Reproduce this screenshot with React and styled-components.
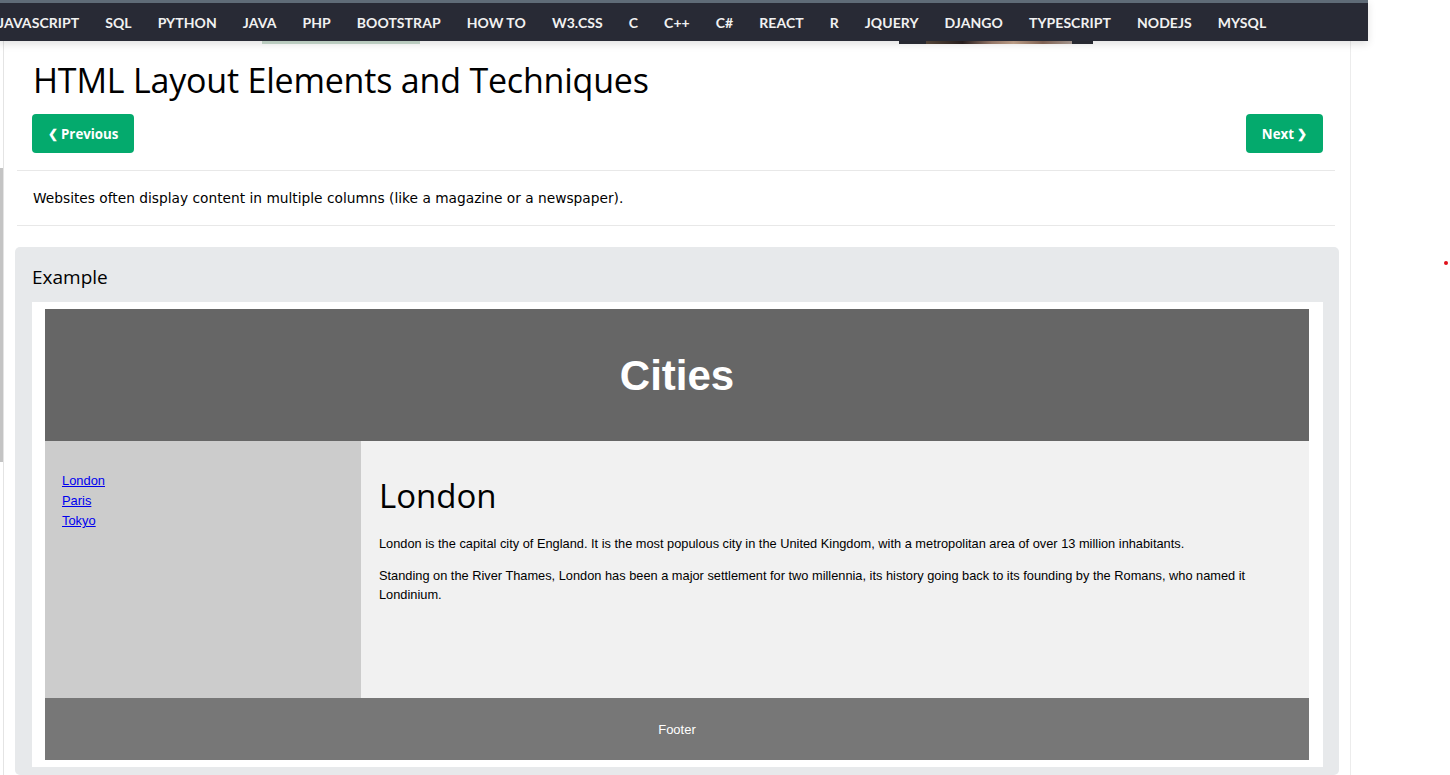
import React from "react";
import styled, { createGlobalStyle } from "styled-components";

const Global = createGlobalStyle`
  html, body { margin: 0; padding: 0; background: #fff; }
  body { width: 1450px; height: 775px; overflow: hidden; }
  * { box-sizing: border-box; }
`;

const Page = styled.div`
  position: relative;
  width: 1450px;
  height: 775px;
  overflow: hidden;
`;

const TopNav = styled.nav`
  position: relative;
  z-index: 2;
  width: 1370px;
  height: 41px;
  background: #282a35;
  border-top: 3px solid #5f6b77;
  display: flex;
  align-items: center;
  gap: 26px;
  margin-left: -2px;
  box-shadow: 0 3px 8px rgba(0, 0, 0, 0.12);
  overflow: hidden;
`;

const NavItem = styled.a`
  color: #f1f1f1;
  font-family: Lato, "Open Sans", sans-serif;
  font-weight: 700;
  font-size: 14px;
  letter-spacing: 0.06px;
  white-space: nowrap;
  text-decoration: none;
`;

const Peek = styled.div`
  position: absolute;
  z-index: 1;
  top: 41px;
  height: 3px;
  left: ${(p) => p.$left}px;
  width: ${(p) => p.$width}px;
  background: ${(p) => p.$bg};
`;

const Body = styled.div`
  display: flex;
  height: 734px;
`;

const LeftRail = styled.div`
  width: 4px;
  border-right: 1px solid #e4e4e4;
  display: flex;
  flex-direction: column;
  padding-top: 127px;
`;

const RailThumb = styled.div`
  width: 3px;
  height: 294px;
  background: #c4c4c4;
`;

const Main = styled.main`
  width: 1347px;
  border-right: 1px solid #ececec;
  padding-left: 11px;
`;

const Content = styled.div`
  width: 1324px;
`;

const Title = styled.h1`
  margin: 0;
  padding: 17px 0 0 18px;
  height: 73px;
  font-family: "Open Sans", "Noto Sans", sans-serif;
  font-weight: 400;
  font-size: 34px;
  line-height: 44px;
  color: #000;
  letter-spacing: -0.2px;
`;

const ButtonRow = styled.div`
  display: flex;
  justify-content: space-between;
  padding: 0 16px 0 17px;
  height: 56px;
`;

const NavButton = styled.a`
  display: inline-flex;
  align-items: center;
  gap: 3px;
  height: 39px;
  padding: 0 ${(p) => p.$pad};
  background: #04aa6d;
  color: #fff;
  border-radius: 4px;
  font-family: "Open Sans", sans-serif;
  font-weight: 700;
  font-size: 13.3px;
  text-decoration: none;
`;

const Chevron = styled.span`
  font-size: 12px;
`;

const Rule = styled.hr`
  margin: 0 4px 0 2px;
  border: 0;
  border-top: 1px solid #e8e8e8;
`;

const Intro = styled.p`
  margin: 0;
  height: 54px;
  padding-left: 18px;
  display: flex;
  align-items: center;
  font-family: "DejaVu Sans", Verdana, sans-serif;
  font-size: 13.75px;
  color: #000;
`;

const ExampleBox = styled.section`
  margin-top: 21px;
  background: #e7e9eb;
  border-radius: 5px;
  padding: 0 16px 8px 17px;
`;

const ExampleTitle = styled.h2`
  margin: 0;
  height: 55px;
  display: flex;
  align-items: center;
  padding-top: 5px;
  font-family: "Open Sans", sans-serif;
  font-weight: 400;
  font-size: 19px;
  color: #000;
`;

const Frame = styled.div`
  background: #fff;
  padding: 7px 14px 7px 13px;
  font-family: "Liberation Sans", Arial, sans-serif;
`;

const Header = styled.header`
  background: #666;
  height: 132px;
  display: flex;
  align-items: center;
  justify-content: center;
  color: #fff;
  font-weight: 700;
  font-size: 42px;
  padding-top: 2px;
`;

const Columns = styled.div`
  display: flex;
  height: 257px;
`;

const Side = styled.nav`
  width: 316px;
  background: #ccc;
  padding: 30px 17px;
`;

const SideList = styled.ul`
  list-style: none;
  margin: 0;
  padding: 0;
  font-size: 12.9px;
  line-height: 20px;
`;

const SideLink = styled.a`
  color: #0000ee;
  text-decoration: underline;
`;

const Article = styled.article`
  flex: 1;
  background: #f1f1f1;
  padding: 30px 18px 0 18px;
  font-size: 12.8px;
  color: #000;
`;

const ArticleTitle = styled.h1`
  margin: 0 0 13px 0;
  font-family: "Open Sans", sans-serif;
  font-weight: 400;
  font-size: 33px;
  line-height: 50px;
`;

const Para = styled.p`
  margin: 0 0 13px 0;
  line-height: 19px;
`;

const Footer = styled.footer`
  background: #777;
  height: 62px;
  display: flex;
  align-items: center;
  justify-content: center;
  color: #fff;
  font-size: 13px;
`;

const RedDot = styled.div`
  position: absolute;
  left: 1444px;
  top: 261px;
  width: 4px;
  height: 4px;
  border-radius: 50%;
  background: #e0101a;
`;

const items = [
  "JAVASCRIPT", "SQL", "PYTHON", "JAVA", "PHP", "BOOTSTRAP", "HOW TO", "W3.CSS",
  "C", "C++", "C#", "REACT", "R", "JQUERY", "DJANGO", "TYPESCRIPT", "NODEJS", "MYSQL",
];

export default function App() {
  return (
    <Page>
      <Global />
      <TopNav>
        {items.map((t) => (
          <NavItem key={t}>{t}</NavItem>
        ))}
      </TopNav>
      <Peek $left={262} $width={158} $bg="#c9dccf" />
      <Peek $left={899} $width={27} $bg="#2b2d36" />
      <Peek $left={926} $width={146} $bg="linear-gradient(90deg,#5a4a3c,#2a2020 25%,#a08070 45%,#c8a890 60%,#8a6a5a 80%,#b0a098)" />
      <Peek $left={1072} $width={21} $bg="#2b2d36" />
      <Body>
        <LeftRail>
          <RailThumb />
        </LeftRail>
        <Main>
          <Content>
            <Title>HTML Layout Elements and Techniques</Title>
            <ButtonRow>
              <NavButton $pad="16px 0 16px"><Chevron>❮</Chevron>Previous</NavButton>
              <NavButton $pad="16px">Next<Chevron>❯</Chevron></NavButton>
            </ButtonRow>
            <Rule />
            <Intro>
              Websites often display content in multiple columns (like a magazine or a newspaper).
            </Intro>
            <Rule />
            <ExampleBox>
              <ExampleTitle>Example</ExampleTitle>
              <Frame>
                <Header>Cities</Header>
                <Columns>
                  <Side>
                    <SideList>
                      <li><SideLink>London</SideLink></li>
                      <li><SideLink>Paris</SideLink></li>
                      <li><SideLink>Tokyo</SideLink></li>
                    </SideList>
                  </Side>
                  <Article>
                    <ArticleTitle>London</ArticleTitle>
                    <Para>
                      London is the capital city of England. It is the most populous city in the United Kingdom, with a metropolitan area of over 13 million inhabitants.
                    </Para>
                    <Para>
                      Standing on the River Thames, London has been a major settlement for two millennia, its history going back to its founding by the Romans, who named it Londinium.
                    </Para>
                  </Article>
                </Columns>
                <Footer>Footer</Footer>
              </Frame>
            </ExampleBox>
          </Content>
        </Main>
      </Body>
      <RedDot />
    </Page>
  );
}
